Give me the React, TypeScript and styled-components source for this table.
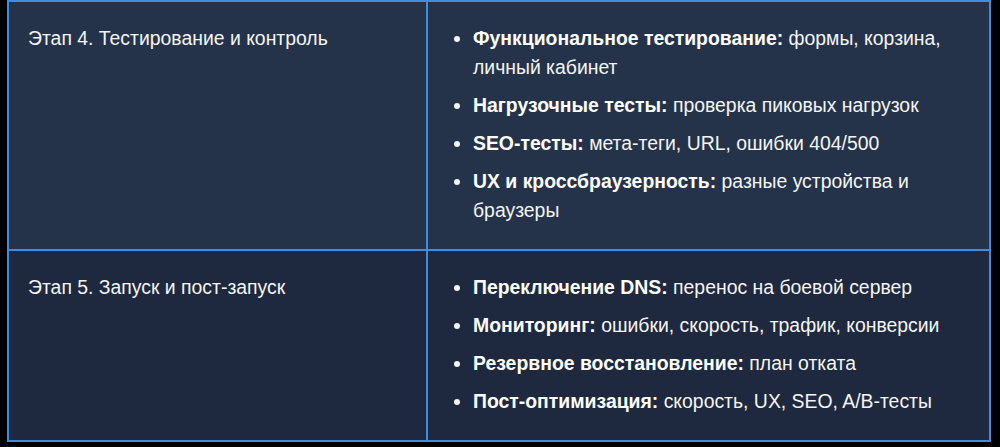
import React from "react";
import styled, { createGlobalStyle } from "styled-components";

const Global = createGlobalStyle`
  html, body { margin: 0; padding: 0; background: #000; }
  body { font-family: "Liberation Sans", Arial, sans-serif; }
`;

const Page = styled.div`
  padding: 0 8px 0 7px;
  height: 447px;
  overflow: hidden;
  background: #000;
`;

const Table = styled.table`
  width: 984px;
  border-collapse: collapse;
  table-layout: fixed;
  color: #f4f4f4;
  font-size: 19.4px;
`;

const Row = styled.tr<{ $tone: "light" | "dark" }>`
  background: ${(p) => (p.$tone === "light" ? "#25334a" : "#1e283e")};
`;

const SpacerCell = styled.td`
  height: 0;
  padding: 0;
  border: 2px solid #3b8ee4;
  border-top: none;
`;

const StageCell = styled.td`
  vertical-align: top;
  padding: 22px 18px 15px 19px;
  border: 2px solid #3b8ee4;
  line-height: 29px;
`;

const ListCell = styled.td`
  vertical-align: top;
  padding: 22px 14px 15px 18px;
  border: 2px solid #3b8ee4;
`;

const List = styled.ul`
  margin: 0;
  padding-left: 27px;
`;

const Item = styled.li`
  line-height: 29px;
  margin-bottom: 9px;
`;

const Key = styled.strong`
  font-weight: 700;
  color: #fff;
`;

type Point = { k: string; v: string };
type Stage = { title: string; tone: "light" | "dark"; points: Point[] };

const stages: Stage[] = [
  {
    title: "Этап 4. Тестирование и контроль",
    tone: "light",
    points: [
      { k: "Функциональное тестирование:", v: "формы, корзина, личный кабинет" },
      { k: "Нагрузочные тесты:", v: "проверка пиковых нагрузок" },
      { k: "SEO-тесты:", v: "мета-теги, URL, ошибки 404/500" },
      { k: "UX и кроссбраузерность:", v: "разные устройства и браузеры" },
    ],
  },
  {
    title: "Этап 5. Запуск и пост-запуск",
    tone: "dark",
    points: [
      { k: "Переключение DNS:", v: "перенос на боевой сервер" },
      { k: "Мониторинг:", v: "ошибки, скорость, трафик, конверсии" },
      { k: "Резервное восстановление:", v: "план отката" },
      { k: "Пост-оптимизация:", v: "скорость, UX, SEO, A/B-тесты" },
    ],
  },
];

export default function App() {
  return (
    <>
      <Global />
      <Page>
        <Table>
          <colgroup>
            <col style={{ width: 419 }} />
            <col />
          </colgroup>
          <tbody>
            <Row $tone="dark">
              <SpacerCell />
              <SpacerCell />
            </Row>
            {stages.map((s) => (
              <Row key={s.title} $tone={s.tone}>
                <StageCell>{s.title}</StageCell>
                <ListCell>
                  <List>
                    {s.points.map((p) => (
                      <Item key={p.k}>
                        <Key>{p.k}</Key> {p.v}
                      </Item>
                    ))}
                  </List>
                </ListCell>
              </Row>
            ))}
          </tbody>
        </Table>
      </Page>
    </>
  );
}
